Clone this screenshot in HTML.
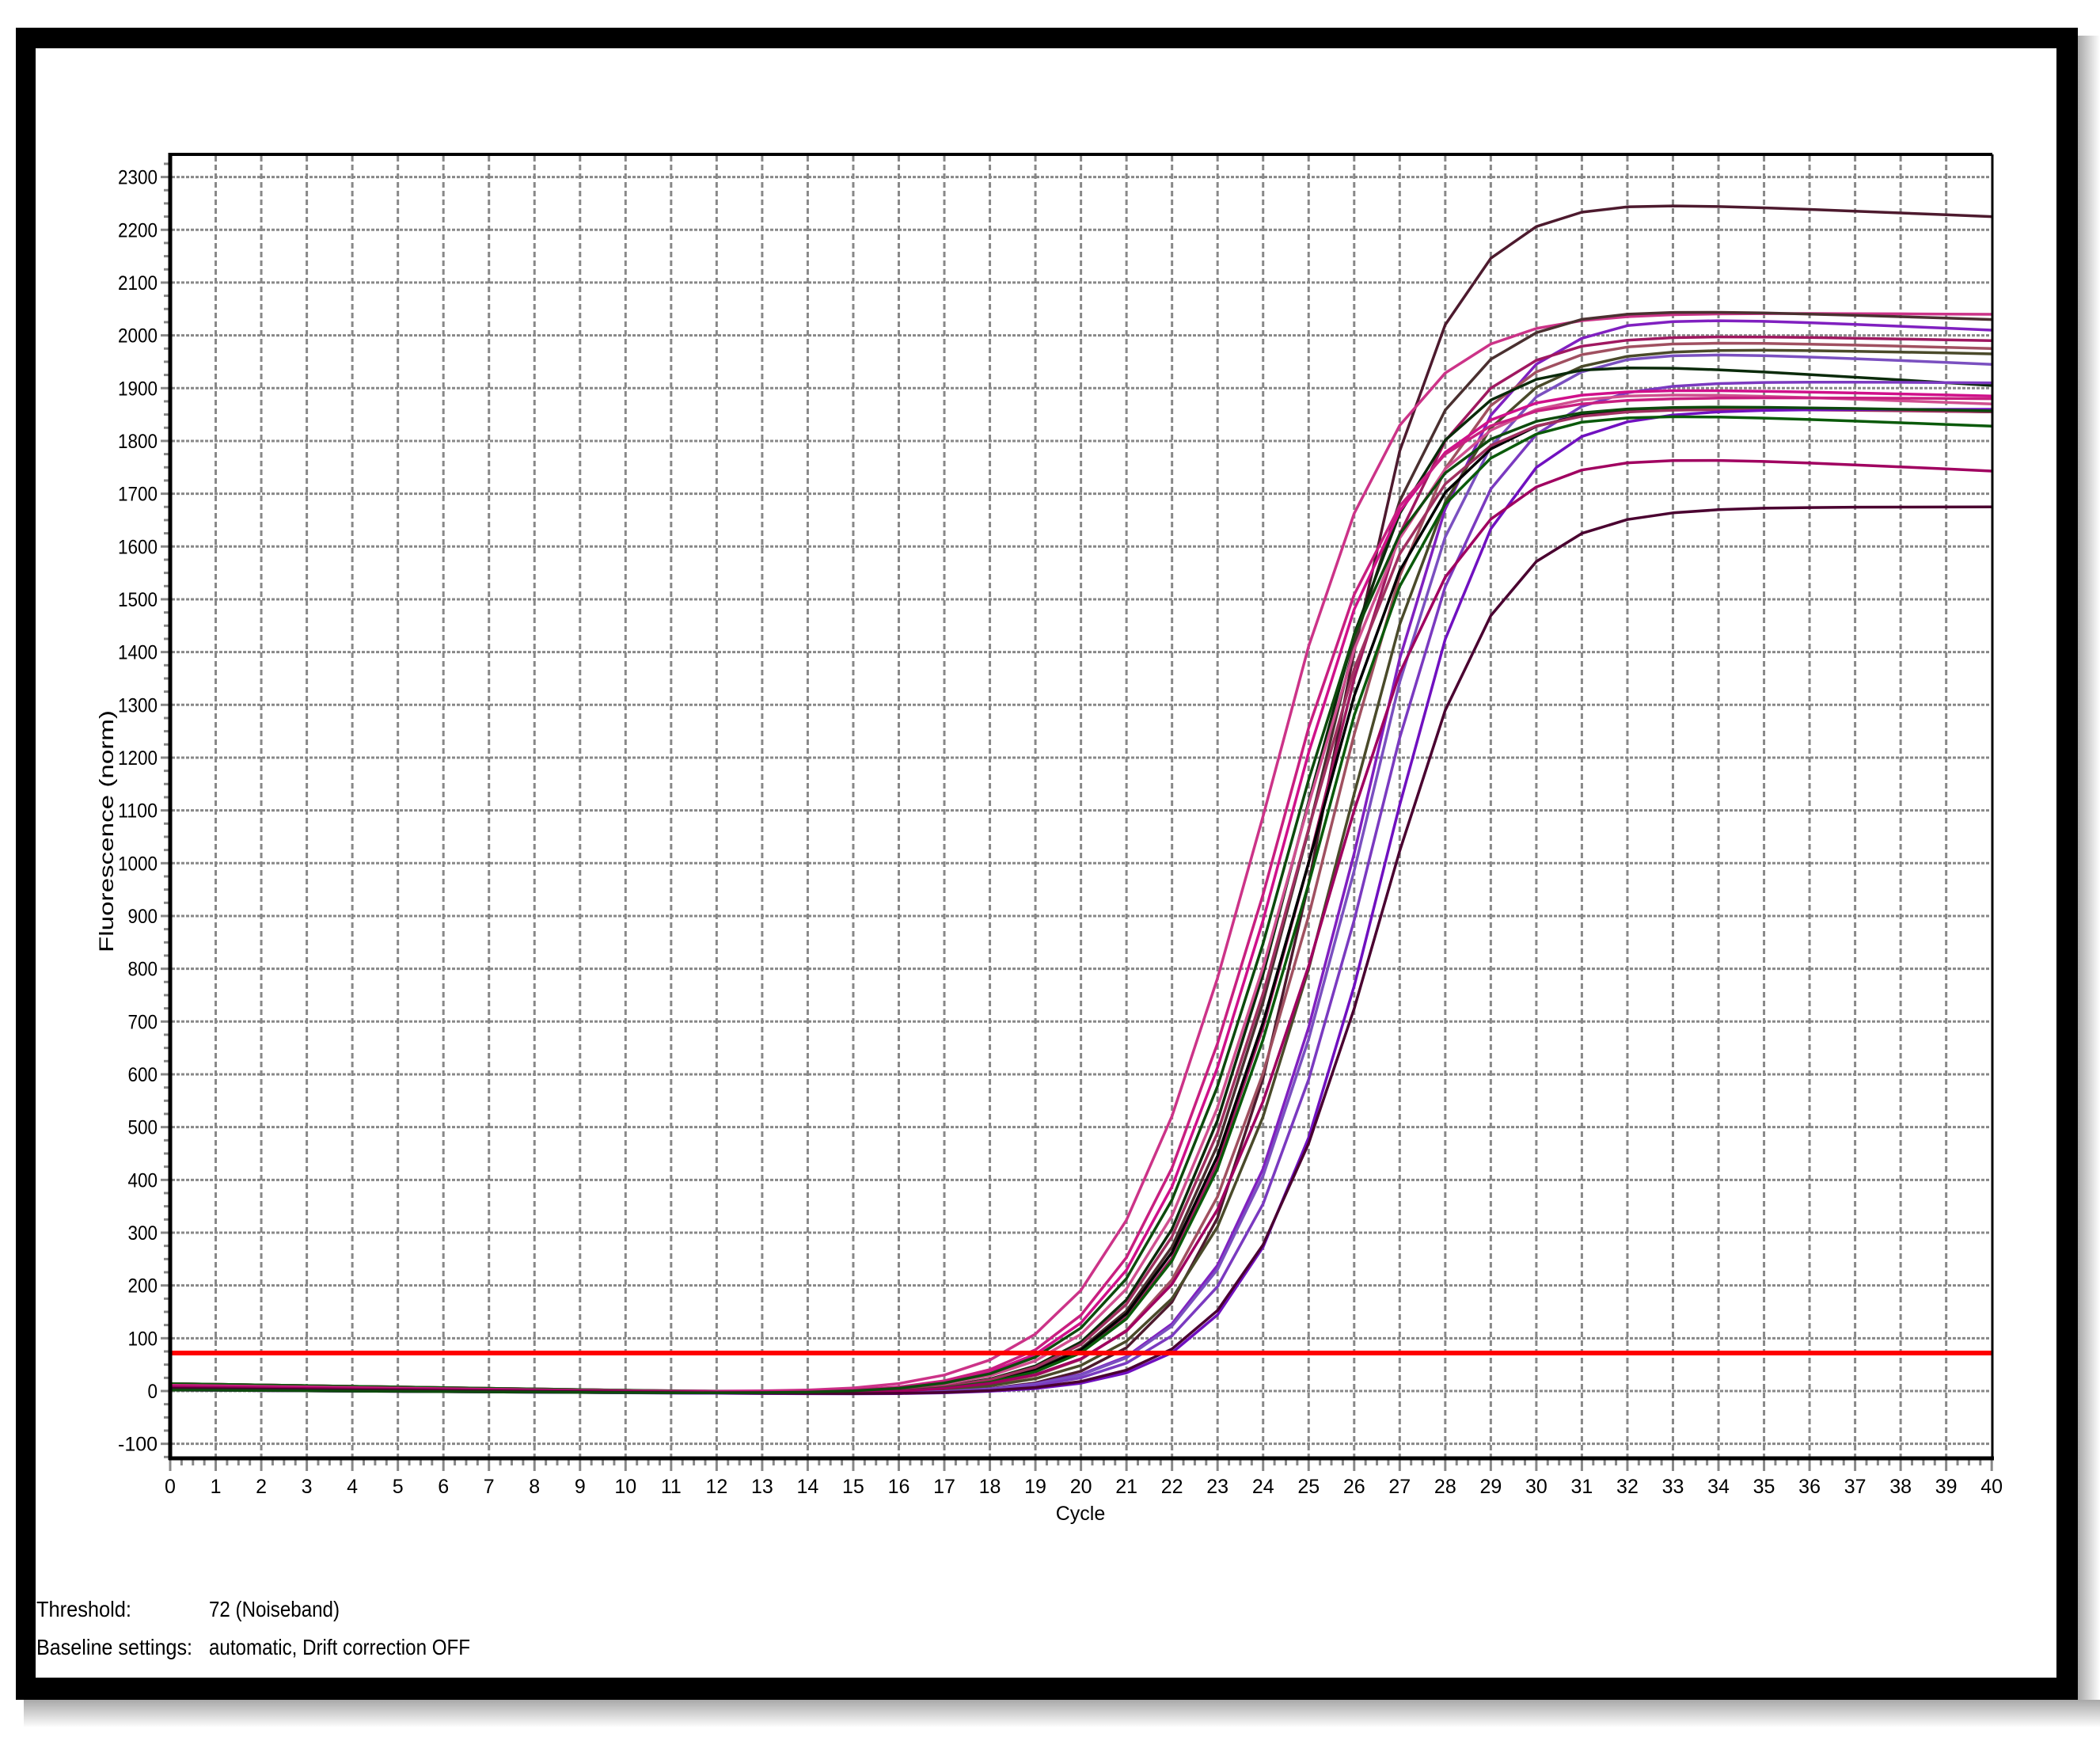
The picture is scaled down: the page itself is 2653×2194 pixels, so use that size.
<!DOCTYPE html>
<html><head><meta charset="utf-8"><style>
html,body{margin:0;padding:0;background:#fff;}
body{width:2653px;height:2194px;position:relative;overflow:hidden;}
svg{position:absolute;left:0;top:0;}
text{font-family:"Liberation Sans",sans-serif;fill:#000;}
</style></head><body>
<svg id="s" width="2653" height="2194" viewBox="0 0 2653 2194" xmlns="http://www.w3.org/2000/svg">
<defs>
<linearGradient id="gr" x1="0" x2="1"><stop offset="0" stop-color="#a8a8a8"/><stop offset="1" stop-color="#fff"/></linearGradient>
<linearGradient id="gb" x1="0" y1="0" x2="0" y2="1"><stop offset="0" stop-color="#a8a8a8"/><stop offset="1" stop-color="#fff"/></linearGradient>
</defs>
<rect x="2625" y="45" width="28" height="2130" fill="url(#gr)"/>
<rect x="30" y="2147" width="2623" height="35" fill="url(#gb)"/>
<rect x="20" y="35" width="2605" height="2112" fill="#000"/>
<rect x="45" y="61" width="2553" height="2058" fill="#fff"/>
<g id="grid"></g>
<g id="curves" fill="none" stroke-width="3.5" stroke-linejoin="round"></g>
<line x1="215" y1="1709" x2="2517" y2="1709" stroke="#ff0000" stroke-width="6"/>
<line x1="215" y1="195" x2="2517" y2="195" stroke="#000" stroke-width="4"/>
<line x1="2517" y1="195" x2="2517" y2="1842" stroke="#000" stroke-width="3"/>
<line x1="215" y1="193" x2="215" y2="1844" stroke="#000" stroke-width="5"/>
<line x1="213" y1="1842" x2="2519" y2="1842" stroke="#000" stroke-width="5"/>
<g id="labels"></g>
<text x="1365" y="1920" font-size="25" text-anchor="middle">Cycle</text>
<text transform="translate(143,1050) rotate(-90)" font-size="25" text-anchor="middle" textLength="306" lengthAdjust="spacingAndGlyphs">Fluorescence (norm)</text>
<text x="46" y="2042" font-size="28" textLength="120" lengthAdjust="spacingAndGlyphs">Threshold:</text>
<text x="264" y="2042" font-size="28" textLength="165" lengthAdjust="spacingAndGlyphs">72 (Noiseband)</text>
<text x="46" y="2090" font-size="28" textLength="197" lengthAdjust="spacingAndGlyphs">Baseline settings:</text>
<text x="264" y="2090" font-size="28" textLength="330" lengthAdjust="spacingAndGlyphs">automatic, Drift correction OFF</text>
</svg>
<script>
var NS="http://www.w3.org/2000/svg";
function X(c){return 215+c*57.53;}
function Y(v){return 1757-v*0.6667;}
function el(p,t,a,txt){var e=document.createElementNS(NS,t);for(var k in a)e.setAttribute(k,a[k]);if(txt!==undefined)e.textContent=txt;p.appendChild(e);return e;}
var g=document.getElementById('grid'),L=document.getElementById('labels');
for(var c=1;c<40;c++){el(g,'line',{x1:X(c),y1:197,x2:X(c),y2:1840,stroke:'#888','stroke-width':3,'stroke-dasharray':'7 4'});}
for(var v=-100;v<=2300;v+=100){el(g,'line',{x1:217,y1:Y(v),x2:2515,y2:Y(v),stroke:'#888','stroke-width':3,'stroke-dasharray':'4 2'});
el(g,'line',{x1:203,y1:Y(v),x2:215,y2:Y(v),stroke:'#888','stroke-width':3});
el(L,'text',{x:199,y:Y(v)+9,'font-size':25,'text-anchor':'end',textLength:(String(v).length*12.5),lengthAdjust:'spacingAndGlyphs'},String(v));}
for(var v=-125;v<=2325;v+=25){if(v%100==0)continue;el(g,'line',{x1:207,y1:Y(v),x2:213,y2:Y(v),stroke:'#888','stroke-width':3});}
for(var c=0;c<=40;c++){el(g,'line',{x1:X(c),y1:1844,x2:X(c),y2:1858,stroke:'#888','stroke-width':3});
el(L,'text',{x:X(c),y:1886,'font-size':25,'text-anchor':'middle'},String(c));
if(c<40)for(var j=1;j<4;j++)el(g,'line',{x1:X(c+j/4),y1:1844,x2:X(c+j/4),y2:1851,stroke:'#888','stroke-width':3});}
var cv=[
[25.4,2255,1.05,30,'#4d1a2e'],[23.8,2045,1.3,5,'#cc3388'],[24.9,2055,1.2,25,'#4a3030'],[26.0,2040,1.15,30,'#8020c0'],
[25.0,2005,1.2,15,'#a01860'],[25.3,1995,1.2,20,'#a05060'],[25.6,1980,1.2,15,'#4a4a2a'],[26.0,1975,1.15,30,'#7a50c0'],
[24.6,1955,1.2,50,'#0a2a0a'],[26.2,1915,1.15,5,'#7a3ac0'],[24.2,1905,1.25,20,'#d0108a'],[24.5,1900,1.25,30,'#d05090'],
[24.8,1870,1.2,15,'#000000'],[24.6,1865,1.2,10,'#a03060'],[26.5,1860,1.1,0,'#7010c0'],[24.9,1858,1.2,30,'#0a5a0a'],
[24.0,1885,1.25,5,'#c81f80'],[25.3,1778,1.25,35,'#a00060'],[26.4,1675,1.15,0,'#4a0030'],[24.3,1872,1.25,15,'#0d4a0d']];
var G=document.getElementById('curves');
cv.forEach(function(p,i){var pts=[];for(var c=0;c<=40;c++){var k=p[2]*(c<p[0]?1.3:1.15);var v=p[1]/(1+Math.exp(-(c-p[0])/k));
var s=p[0]+6;if(c>s)v-=p[3]*(c-s)/(40-s);
var b=c<16?(14-(i%5)*3)*(1-c/16)-c*0.4:-6+(c-16)*0.3;v+=b*(1-v/p[1]);
pts.push(X(c).toFixed(1)+','+Y(v).toFixed(1));}
el(G,'polyline',{points:pts.join(' '),stroke:p[4]});});
</script>
</body></html>
